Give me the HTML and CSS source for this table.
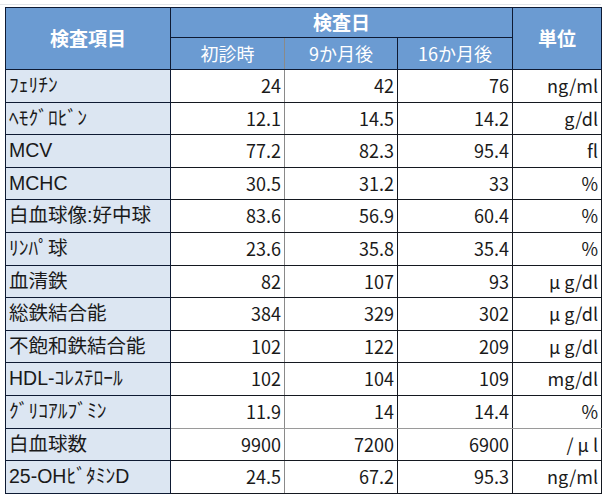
FILE: index.html
```html
<!DOCTYPE html>
<html lang="ja">
<head>
<meta charset="utf-8">
<link rel="stylesheet" href="styles.css">
</head>
<body>
<div class="topline"></div>
<table class="lab">
  <colgroup>
    <col class="c-name"><col class="c-v1"><col class="c-v2"><col class="c-v3"><col class="c-unit">
  </colgroup>
  <thead>
    <tr class="h1">
      <th rowspan="2" class="hb">検査項目</th>
      <th colspan="3" class="hb">検査日</th>
      <th rowspan="2" class="hb">単位</th>
    </tr>
    <tr class="h2">
      <th class="sub sep">初診時</th>
      <th class="sub">9か月後</th>
      <th class="sub">16か月後</th>
    </tr>
  </thead>
  <tbody>
    <tr><td class="name">ﾌｪﾘﾁﾝ</td><td class="sep">24</td><td>42</td><td>76</td><td>ng/ml</td></tr>
    <tr><td class="name">ﾍﾓｸﾞﾛﾋﾞﾝ</td><td class="sep">12.1</td><td>14.5</td><td>14.2</td><td>g/dl</td></tr>
    <tr><td class="name">MCV</td><td class="sep">77.2</td><td>82.3</td><td>95.4</td><td>fl</td></tr>
    <tr><td class="name">MCHC</td><td class="sep">30.5</td><td>31.2</td><td>33</td><td>%</td></tr>
    <tr><td class="name">白血球像:好中球</td><td class="sep">83.6</td><td>56.9</td><td>60.4</td><td>%</td></tr>
    <tr><td class="name">ﾘﾝﾊﾟ球</td><td class="sep">23.6</td><td>35.8</td><td>35.4</td><td>%</td></tr>
    <tr><td class="name">血清鉄</td><td class="sep">82</td><td>107</td><td>93</td><td><span class="mu">μ</span>g/dl</td></tr>
    <tr><td class="name">総鉄結合能</td><td class="sep">384</td><td>329</td><td>302</td><td><span class="mu">μ</span>g/dl</td></tr>
    <tr><td class="name">不飽和鉄結合能</td><td class="sep">102</td><td>122</td><td>209</td><td><span class="mu">μ</span>g/dl</td></tr>
    <tr><td class="name">HDL-ｺﾚｽﾃﾛｰﾙ</td><td class="sep">102</td><td>104</td><td>109</td><td>mg/dl</td></tr>
    <tr class="lt"><td class="name">ｸﾞﾘｺｱﾙﾌﾞﾐﾝ</td><td class="sep">11.9</td><td>14</td><td>14.4</td><td>%</td></tr>
    <tr><td class="name">白血球数</td><td class="sep">9900</td><td>7200</td><td>6900</td><td>/ <span class="mu">μ</span>l</td></tr>
    <tr><td class="name">25-OHﾋﾞﾀﾐﾝD</td><td class="sep">24.5</td><td>67.2</td><td>95.3</td><td>ng/ml</td></tr>
  </tbody>
</table>
</body>
</html>
```

FILE: styles.css
```css
html, body {
  margin: 0;
  padding: 0;
  background: #ffffff;
}
body {
  font-family: "Noto Sans CJK JP", "Noto Sans", sans-serif;
  color: #111111;
}
.topline {
  width: 601px;
  height: 1px;
  margin-top: 4px;
  background: #e2e5e8;
}
.lab {
  margin: 2px 0 0 5px;
  width: 596px;
  table-layout: fixed;
  border-collapse: collapse;
}
.c-name { width: 165px; }
.c-v1 { width: 114px; }
.c-v2 { width: 113px; }
.c-v3 { width: 115px; }
.c-unit { width: 89px; }

.lab th, .lab td {
  border: 1px solid #141820;
  padding: 0 3px;
  white-space: nowrap;
  overflow: hidden;
}
.lab th {
  background: #6b9bd2;
  color: #ffffff;
  text-align: center;
  border-color: #0e1a33;
}
.h1 { height: 30px; }
.h2 { height: 32px; }
.hb {
  font-size: 19px;
  font-weight: 700;
  line-height: 1.2;
}
.sub {
  font-size: 18px;
  font-weight: 400;
  color: #eef4fc;
  line-height: 1.2;
}
.lab tbody tr { height: 32.6px; }
.lab td {
  font-size: 18px;
  line-height: 1.2;
  text-align: right;
  background: #ffffff;
  color: #1a1a1a;
}
.lab td.name {
  text-align: left;
  font-family: "Liberation Sans", "Noto Sans CJK JP", sans-serif;
  font-size: 19.5px;
  background: #dce6f2;
  border-color: #0e1a33;
}
.mu {
  display: inline-block;
  margin-right: 4px;
}
.lab td.sep, .lab th.sep {
  border-right: 1px solid #8a8a8a;
}
.lab tr.lt td:not(.name) {
  border-bottom-color: #9a9a9a;
}
```
